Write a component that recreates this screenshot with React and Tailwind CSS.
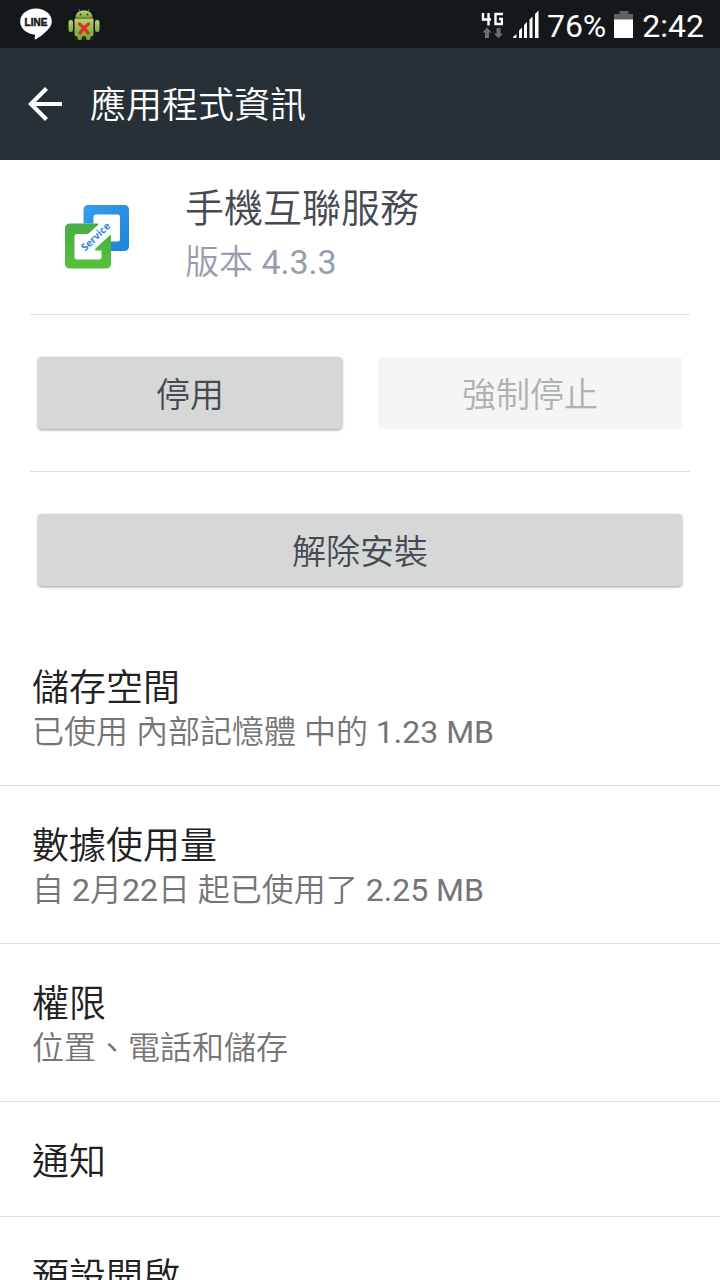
import React from "react";

import clsx from "clsx";

const ROWS = [
  { title: "儲存空間", summary: "已使用 內部記憶體 中的 1.23 MB" },
  { title: "數據使用量", summary: "自 2月22日 起已使用了 2.25 MB" },
  { title: "權限", summary: "位置、電話和儲存" },
  { title: "通知" },
  { title: "預設開啟" },
];

const LineIcon = () => (
  <svg className="h-8 w-8" viewBox="0 0 32 32" aria-label="LINE" role="img">
    <path
      d="M16 0.500C7.300 0.500 0.200 6.100 0.200 13.400c0 6.800 6 12.100 13.700 13 .9.200 1.200.8 1.100 1.700l-.3 2.600c-.1.600.3 1 1 .6 2.600-1.400 8.500-5.300 12.100-9.600 2.600-2.700 4-5.300 4-8.300C31.800 6.100 24.700 0.500 16 0.500z"
      fill="#fff"
    />
    <text
      x="16"
      y="18"
      textAnchor="middle"
      className="font-['Liberation_Sans',sans-serif] text-[10px] font-bold"
      fill="#14181b"
      stroke="#14181b"
      strokeWidth="0.5"
    >
      LINE
    </text>
  </svg>
);

const DroidIcon = () => (
  <svg className="h-8 w-8" viewBox="0 0 32 32" aria-hidden="true">
    <defs>
      <linearGradient id="droid" x1="0" x2="0" y1="0" y2="1">
        <stop offset="0" stopColor="#b9d27c" />
        <stop offset="1" stopColor="#7da83a" />
      </linearGradient>
    </defs>
    <ellipse cx="16" cy="30.500" rx="10" ry="1.200" fill="#29331a" />
    <path d="M10.500 1l2 3M21.500 1l-2 3" stroke="#6d8343" strokeWidth="1" />
    <path d="M7.500 9.500C7.500 5 11 2.500 16 2.500s8.500 2.500 8.500 7z" fill="url(#droid)" />
    <circle cx="12.500" cy="6.500" r="0.900" fill="#2c3a10" />
    <circle cx="19.500" cy="6.500" r="0.900" fill="#2c3a10" />
    <rect x="0.500" y="12" width="4.500" height="12" rx="2" fill="url(#droid)" />
    <rect x="27" y="12" width="4.500" height="12" rx="2" fill="url(#droid)" />
    <rect x="9.500" y="24" width="4.500" height="8" rx="2" fill="#7da83a" />
    <rect x="18" y="24" width="4.500" height="8" rx="2" fill="#7da83a" />
    <rect x="6.500" y="9.500" width="19" height="19" rx="2.500" fill="url(#droid)" />
    <path d="M7 10.200h18" stroke="#4f6d20" strokeWidth="1" />
    <path
      d="M11.500 16c3 2 6 5.500 8.500 9M20.500 16c-3.500 2.500-6.500 6-8.500 9"
      stroke="#dc3220"
      strokeWidth="3.200"
      strokeLinecap="round"
    />
  </svg>
);

const NetworkIcon = () => (
  <svg className="h-7 w-6" viewBox="0 0 24 28" fill="none" aria-hidden="true">
    <path
      d="M4 3v6.500h8M9.500 3v12.500M24 4h-7.500v10H23V9h-3"
      stroke="#fff"
      strokeWidth="2.400"
    />
    <path
      d="M8 17.500l4.500 5H10v5.500H6v-5.500H3.500zM19.500 28.500L15 23.500h2.500V18h4v5.500H24z"
      fill="#6b6e70"
    />
  </svg>
);

const SignalIcon = () => (
  <svg className="h-7 w-7" viewBox="0 0 28 28" aria-hidden="true">
    <path
      d="M2 28v-1l3.500-3v4zM8 28v-7.500l3-3V28zM13 28V15l3-3v16zM18.500 28V9.500l3-3V28zM24 28V4L27.500 0.500V28z"
      fill="#fff"
    />
  </svg>
);

const BatteryIcon = () => (
  <svg className="h-7 w-5" viewBox="0 0 20 28" aria-hidden="true">
    <path d="M5.500 1h9v3H19v6H0V4h5.500z" fill="#5f6163" />
    <path d="M0 9.500h19V28H0z" fill="#fff" />
  </svg>
);

const ServiceLogo = () => (
  <svg className="mt-1 h-16 w-16" viewBox="0 0 64 64" aria-label="Service" role="img">
    <defs>
      <linearGradient id="blue" x1="0" x2="1" y1="0" y2="1">
        <stop offset="0" stopColor="#3a9cec" />
        <stop offset="1" stopColor="#1b85d9" />
      </linearGradient>
      <linearGradient id="green" x1="0" x2="0" y1="0" y2="1">
        <stop offset="0" stopColor="#46ad45" />
        <stop offset="1" stopColor="#54c13b" />
      </linearGradient>
    </defs>
    <path
      d="M23.500 0H59q5 0 5 5v36q0 5-5 5H46V36.500h6.500q2.500 0 2.500-2.500V12q0-2.500-2.500-2.500H31q-2.500 0-2.500 2.500v6.500h-10V5q0-5 5-5z"
      fill="url(#blue)"
    />
    <path
      d="M5 18.500h27q2.500 0 1 1.500L23 29H12q-2.500 0-2.500 2.500v20.500q0 2.500 2.500 2.500h22q2.500 0 2.500-2.500V45.500H31q-2 0-0.500-2L44 31q2-2 2 0.500v27q0 5-5 5H5q-5 0-5-5V23.500q0-5 5-5z"
      fill="url(#green)"
    />
    <text
      x="31"
      y="35"
      textAnchor="middle"
      transform="rotate(-44 31 32)"
      className="font-['Open_Sans',sans-serif] text-[10px] font-bold"
      fill="#2b86d6"
    >
      Service
    </text>
  </svg>
);

const StatusBar = () => (
  <div className="flex h-12 shrink-0 items-center justify-between bg-[#14181b] px-4 text-white">
    <div className="flex items-center gap-4 pl-1">
      <LineIcon />
      <DroidIcon />
    </div>
    <div className="flex items-center gap-2 text-[32px] leading-none">
      <NetworkIcon />
      <SignalIcon />
      <span className="pt-1">76%</span>
      <BatteryIcon />
      <span className="pt-1">2:42</span>
    </div>
  </div>
);

const ActionButton = ({ children, disabled }) => (
  <button
    type="button"
    disabled={disabled}
    className={clsx(
      "h-[72px] flex-1 rounded pt-1 text-[34px] leading-none",
      disabled
        ? "bg-[#f4f5f5] text-[#afb1b3]"
        : "bg-[#d6d7d7] text-[#454a52] shadow-[0_1px_3px_rgba(0,0,0,0.4)]"
    )}
  >
    {children}
  </button>
);

const Row = ({ title, summary }) => (
  <li className="border-b border-[#dcdcdc]">
    <a href="#" className="block px-8 pt-[39px] pb-[31px]">
      <span className="block text-[37px] leading-[44px] text-[#212121]">{title}</span>
      {summary && (
        <span className="block text-[32px] leading-[43px] text-[#757575]">{summary}</span>
      )}
    </a>
  </li>
);

const App = () => (
  <div
    lang="zh-Hant"
    className="flex h-screen flex-col overflow-hidden bg-white font-['Roboto','Noto_Sans_CJK_TC_DemiLight','Noto_Sans_CJK_TC',sans-serif] font-normal"
  >
    <StatusBar />
    <header className="flex h-28 shrink-0 items-center bg-[#263036] px-7 text-white">
      <button type="button" aria-label="返回" className="mr-[26px]">
        <svg className="h-9 w-9" viewBox="0 0 36 36" fill="none" aria-hidden="true">
          <path d="M34 18H4M18.500 2.500L3 18l15.500 15.500" stroke="#fff" strokeWidth="4.200" />
        </svg>
      </button>
      <h1 className="pt-1 text-[36px] leading-[44px]">應用程式資訊</h1>
    </header>
    <main className="min-h-0 flex-1 overflow-y-auto [scrollbar-width:none]">
      <div className="px-[30px]">
        <section className="flex items-center gap-14 border-b border-[#dcdcdc] pt-[22px] pb-[26px] pl-[35px]">
          <ServiceLogo />
          <div>
            <h2 className="text-[39px] leading-[54px] text-[#454a52]">手機互聯服務</h2>
            <p className="text-[34px] leading-[52px] text-[#969dac]">版本 4.3.3</p>
          </div>
        </section>
        <div className="flex gap-9 border-b border-[#dcdcdc] px-2 py-[42px]">
          <ActionButton>停用</ActionButton>
          <ActionButton disabled>強制停止</ActionButton>
        </div>
        <div className="flex px-2 py-[42px]">
          <ActionButton>解除安裝</ActionButton>
        </div>
      </div>
      <ul>
        {ROWS.map((row) => (
          <Row key={row.title} {...row} />
        ))}
      </ul>
    </main>
  </div>
);

export default App;
